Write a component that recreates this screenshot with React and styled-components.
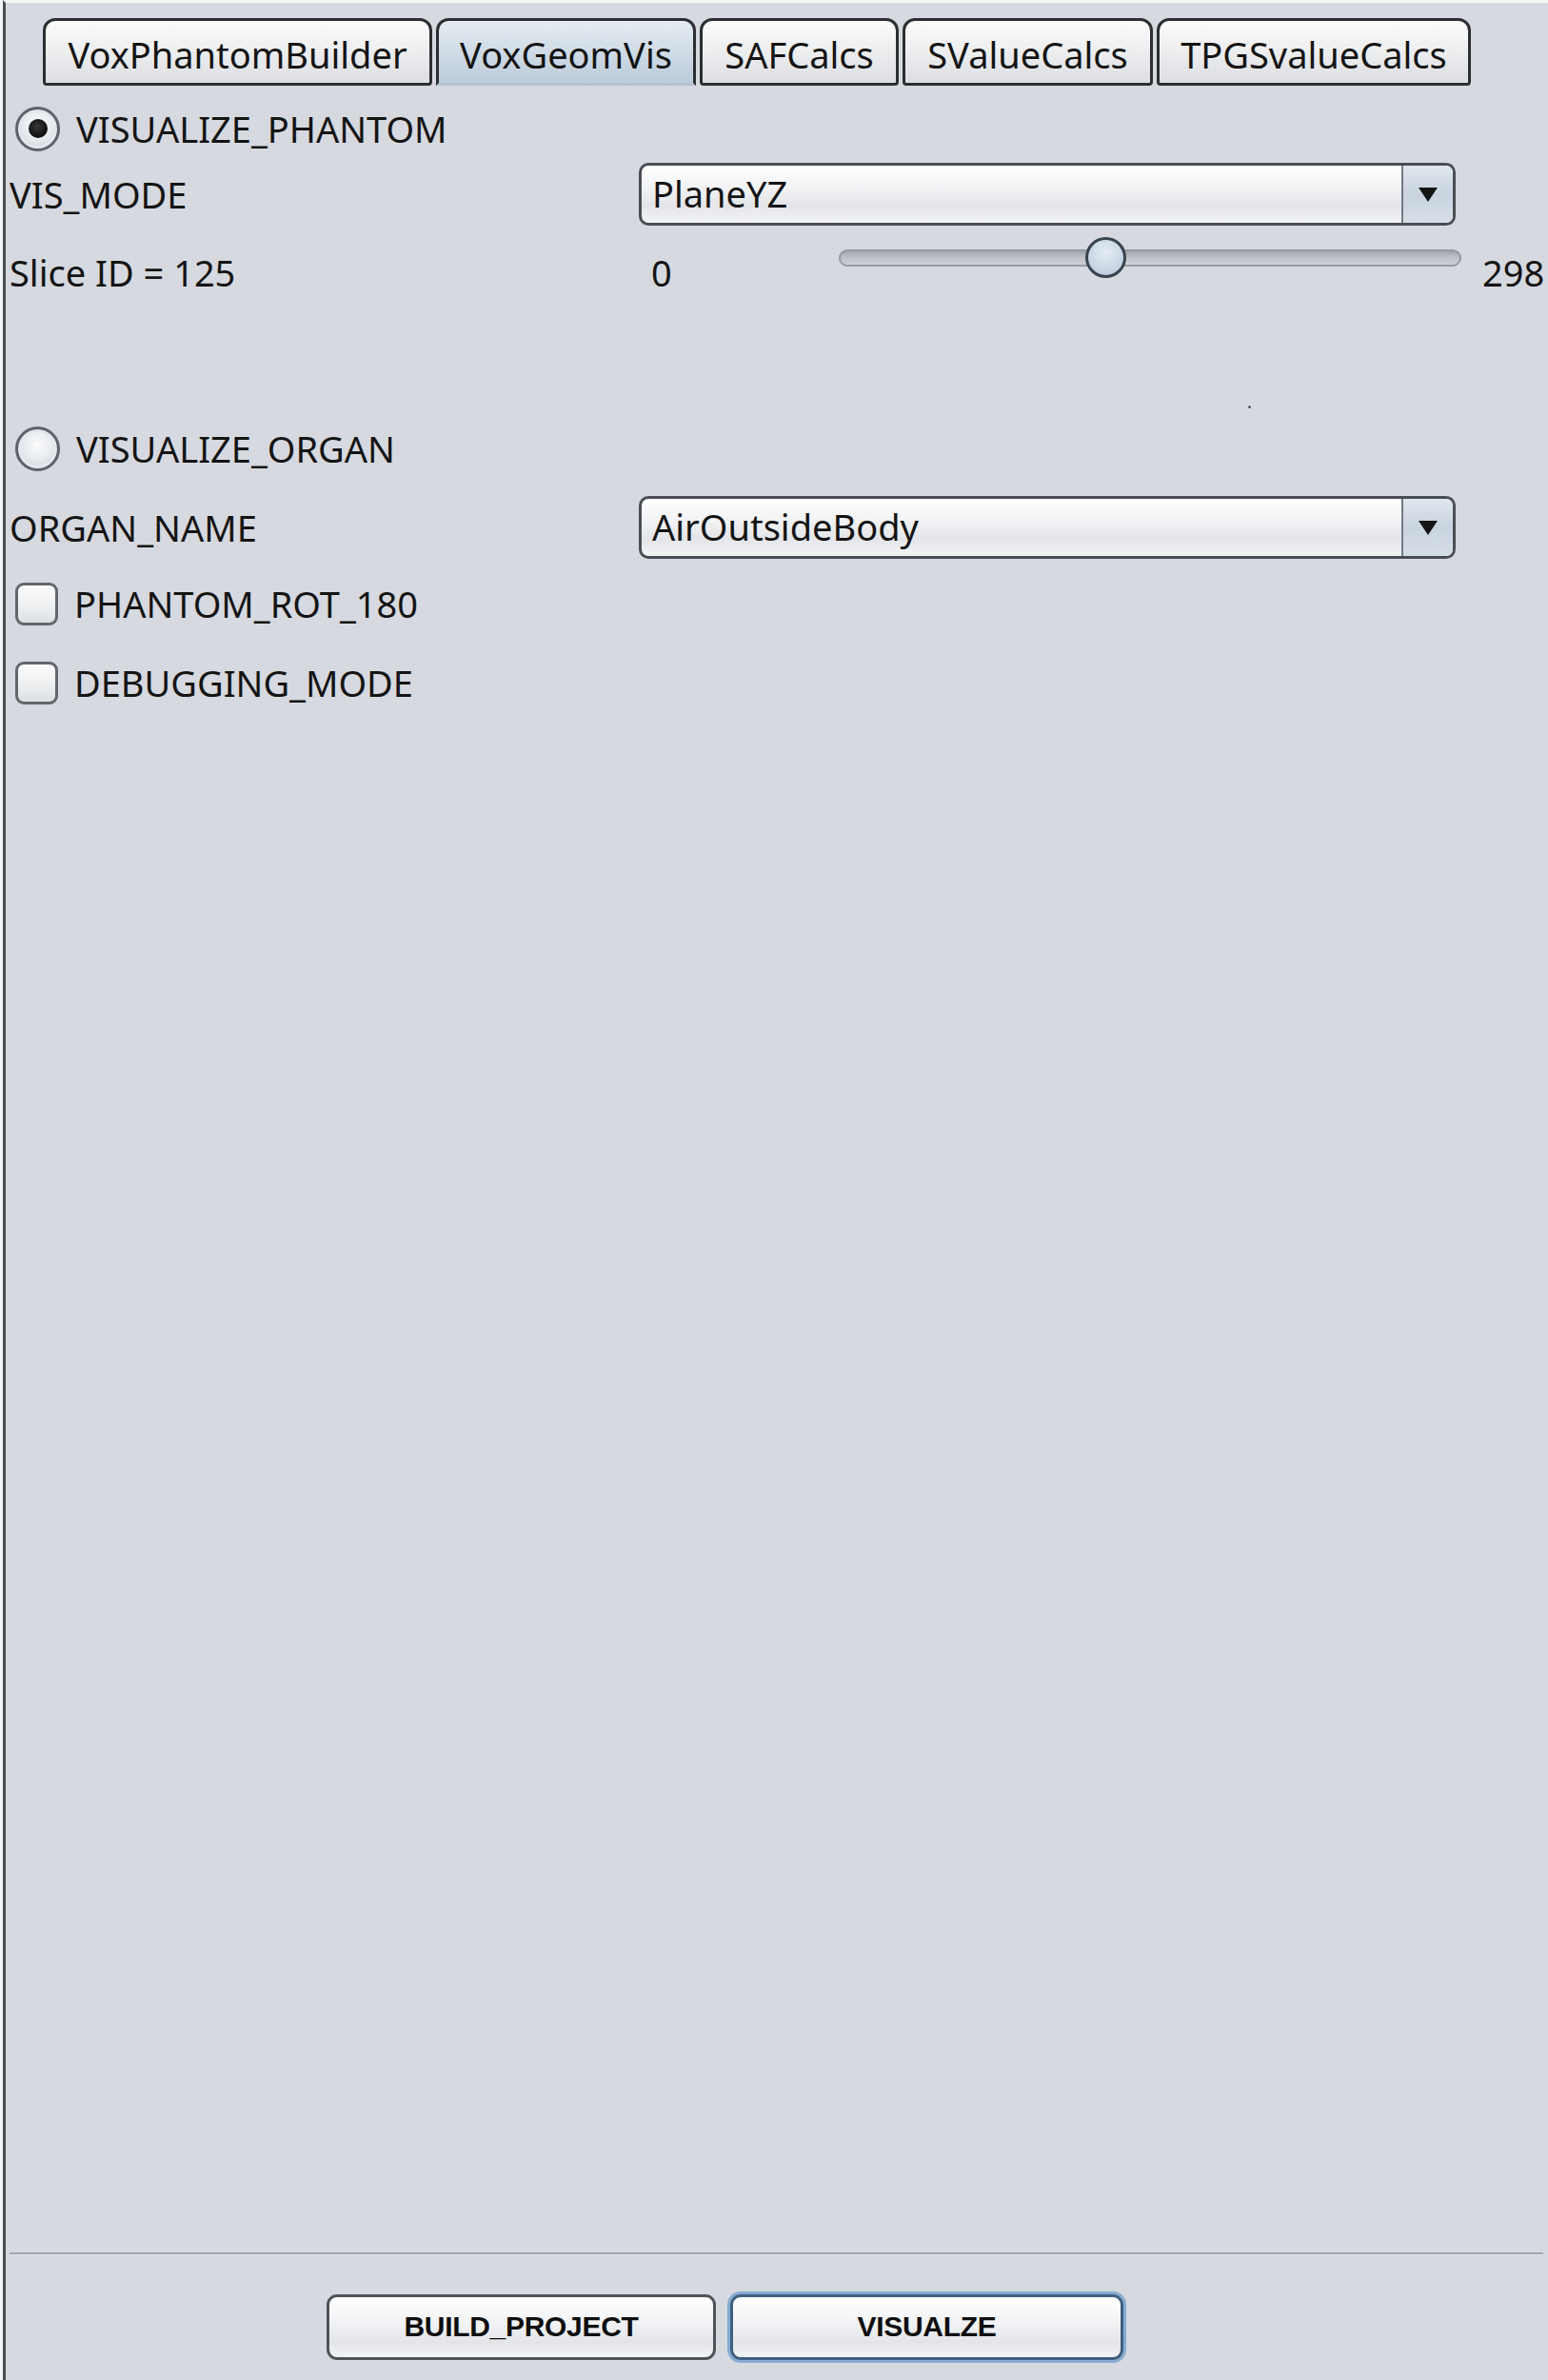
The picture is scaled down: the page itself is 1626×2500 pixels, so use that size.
import React from 'react';
import styled, { createGlobalStyle, css } from 'styled-components';

const FONT = `"Noto Sans", "Open Sans", "DejaVu Sans", sans-serif`;
const BTN_FONT = `"Liberation Sans", "DejaVu Sans", sans-serif`;

const Global = createGlobalStyle`
  html, body { margin: 0; padding: 0; background: #f3f4f6; }
  body { font-family: ${FONT}; }
  * { box-sizing: border-box; }
`;

const Window = styled.div`
  height: 2500px;
  margin-left: 3px;
  border-top: 3px solid #f6f7f9;
  border-left: 3px solid #4b4f54;
  background: #d6d9df;
  color: #141414;
  font-family: ${FONT};
  font-size: 38px;
  display: flex;
  flex-direction: column;
`;

const Main = styled.div`
  flex: 1;
  display: flex;
  flex-direction: column;
  padding-left: 4px;
`;

const TabBar = styled.div`
  display: flex;
  gap: 4px;
  padding: 16px 0 0 35px;
`;

const Tab = styled.div`
  width: ${p => p.$w}px;
  height: 71px;
  display: flex;
  align-items: center;
  justify-content: center;
  border: 3px solid #2c2e31;
  border-radius: 13px 13px 4px 4px;
  background: linear-gradient(#fbfbfc 0%, #eeeff1 45%, #dcdee1 100%);
  font-size: 38px;
  line-height: 1;
  padding-top: 5px;
  ${p => p.$active && css`
    background: linear-gradient(#e6ecf2 0%, #d0dbe6 50%, #bccbdb 100%);
    border-bottom-color: #b5c4d3;
    border-radius: 13px 13px 0 0;
  `}
`;

const Row = styled.div`
  display: grid;
  grid-template-columns: 661px 1fr;
  align-items: center;
  height: ${p => p.$h}px;
  margin-top: ${p => p.$mt}px;
`;

const Label = styled.span`
  line-height: 1;
  white-space: nowrap;
`;

const ChoiceRow = styled.label`
  display: flex;
  align-items: center;
  gap: 17px;
  height: ${p => p.$h}px;
  margin-top: ${p => p.$mt}px;
  padding-left: 6px;
  line-height: 1;
`;

const Radio = styled.span`
  width: 47px;
  height: 47px;
  border-radius: 50%;
  border: 3px solid #5d636b;
  background: radial-gradient(circle at 50% 40%, #fbfcfd 0%, #e6e9ed 50%, #c4c9d0 100%);
  box-shadow: inset 0 0 0 3px #e4e8ec;
  display: flex;
  align-items: center;
  justify-content: center;
  flex: none;
  &::after {
    content: '';
    display: ${p => (p.$on ? 'block' : 'none')};
    width: 20px;
    height: 20px;
    border-radius: 50%;
    background: radial-gradient(circle at 45% 40%, #3a3a3a 0%, #0c0c0c 70%);
  }
`;

const Check = styled.span`
  width: 45px;
  height: 45px;
  border-radius: 9px;
  border: 3px solid #62676d;
  background: linear-gradient(#fbfbfb 0%, #eceef0 60%, #dcdfe3 100%);
  flex: none;
`;

const Combo = styled.div`
  width: 858px;
  height: 66px;
  border: 3px solid #4a4e54;
  border-radius: 10px;
  background: linear-gradient(#ffffff 0%, #f1f2f4 40%, #e3e5e8 70%, #f3f4f6 100%);
  display: flex;
  align-items: stretch;
  overflow: hidden;
`;

const ComboText = styled.div`
  flex: 1;
  display: flex;
  align-items: center;
  padding-left: 11px;
  line-height: 1;
  padding-bottom: 2px;
`;

const ComboArrow = styled.div`
  width: 54px;
  border-left: 2px solid #6f7b88;
  background: linear-gradient(#dfe6ee 0%, #c9d4df 50%, #d6dee7 100%);
  display: flex;
  align-items: center;
  justify-content: center;
  svg { display: block; }
`;

const SliderCluster = styled.div`
  display: flex;
  align-items: center;
`;

const MinLabel = styled.span`
  width: 210px;
  padding-left: 13px;
  line-height: 1;
`;

const Track = styled.div`
  position: relative;
  width: 654px;
  height: 18px;
  border-radius: 9px;
  border: 2px solid #959aa1;
  background: linear-gradient(#a3a8b0 0%, #bfc3c9 50%, #cdd0d5 100%);
  margin-top: -30px;
`;

const Thumb = styled.div`
  position: absolute;
  top: 50%;
  width: 43px;
  height: 43px;
  margin-left: -21px;
  margin-top: -22px;
  border-radius: 50%;
  border: 3px solid #3a4450;
  background: radial-gradient(circle at 50% 35%, #e4ecf4 0%, #c9d6e3 60%, #b3c3d3 100%);
`;

const MaxLabel = styled.span`
  margin-left: 22px;
  line-height: 1;
`;

const Spacer = styled.div`
  height: 135px;
  padding: 115px 0 0 1301px;
`;

const Dot = styled.span`
  display: block;
  width: 3px;
  height: 3px;
  background: #555;
  border-radius: 50%;
`;

const Footer = styled.div`
  display: flex;
  flex-direction: column;
`;

const Separator = styled.div`
  margin: 0 5px 0 4px;
  height: 3px;
  border-top: 2px solid #a3a7ad;
  border-bottom: 1px solid #e3e5e9;
`;

const ButtonRow = styled.div`
  display: flex;
  gap: 15px;
  padding: 41px 0 21px 337px;
`;

const Button = styled.button`
  width: ${p => p.$w}px;
  height: 69px;
  border: 3px solid #4f5358;
  border-radius: 11px;
  background: linear-gradient(#ffffff 0%, #f1f2f4 45%, #e3e5e8 75%, #f2f3f5 100%);
  font-family: ${BTN_FONT};
  font-weight: bold;
  font-size: 30px;
  letter-spacing: -0.3px;
  color: #0e0e0e;
  padding: 0 0 2px;
  ${p => p.$focus && css`
    border-color: #3f5f80;
    box-shadow: 0 0 0 3px #86abd2;
  `}
`;

const Arrow = () => (
  <svg width="22" height="18" viewBox="0 0 22 18">
    <path d="M1 2 L21 2 L11 17 Z" fill="#151515" />
  </svg>
);

export default function App() {
  const value = 125;
  const max = 298;
  const trackInner = 654 - 40;
  const thumbLeft = 20 + (value / max) * trackInner;

  return (
    <>
      <Global />
      <Window>
        <Main>
          <TabBar>
            <Tab $w={409}>VoxPhantomBuilder</Tab>
            <Tab $w={273} $active>VoxGeomVis</Tab>
            <Tab $w={209}>SAFCalcs</Tab>
            <Tab $w={263}>SValueCalcs</Tab>
            <Tab $w={330}>TPGSvalueCalcs</Tab>
          </TabBar>

          <ChoiceRow $h={50} $mt={20}>
            <Radio $on />
            <Label>VISUALIZE_PHANTOM</Label>
          </ChoiceRow>

          <Row $h={66} $mt={11}>
            <Label>VIS_MODE</Label>
            <Combo>
              <ComboText>PlaneYZ</ComboText>
              <ComboArrow><Arrow /></ComboArrow>
            </Combo>
          </Row>

          <Row $h={50} $mt={24}>
            <Label>Slice ID = 125</Label>
            <SliderCluster>
              <MinLabel>0</MinLabel>
              <Track>
                <Thumb style={{ left: `${thumbLeft}px` }} />
              </Track>
              <MaxLabel>298</MaxLabel>
            </SliderCluster>
          </Row>

          <Spacer><Dot /></Spacer>

          <ChoiceRow $h={50} $mt={0}>
            <Radio />
            <Label>VISUALIZE_ORGAN</Label>
          </ChoiceRow>

          <Row $h={67} $mt={24}>
            <Label>ORGAN_NAME</Label>
            <Combo>
              <ComboText>AirOutsideBody</ComboText>
              <ComboArrow><Arrow /></ComboArrow>
            </Combo>
          </Row>

          <ChoiceRow $h={50} $mt={22}>
            <Check />
            <Label>PHANTOM_ROT_180</Label>
          </ChoiceRow>

          <ChoiceRow $h={50} $mt={33}>
            <Check />
            <Label>DEBUGGING_MODE</Label>
          </ChoiceRow>
        </Main>

        <Footer>
          <Separator />
          <ButtonRow>
            <Button $w={409}>BUILD_PROJECT</Button>
            <Button $w={413} $focus>VISUALZE</Button>
          </ButtonRow>
        </Footer>
      </Window>
    </>
  );
}
